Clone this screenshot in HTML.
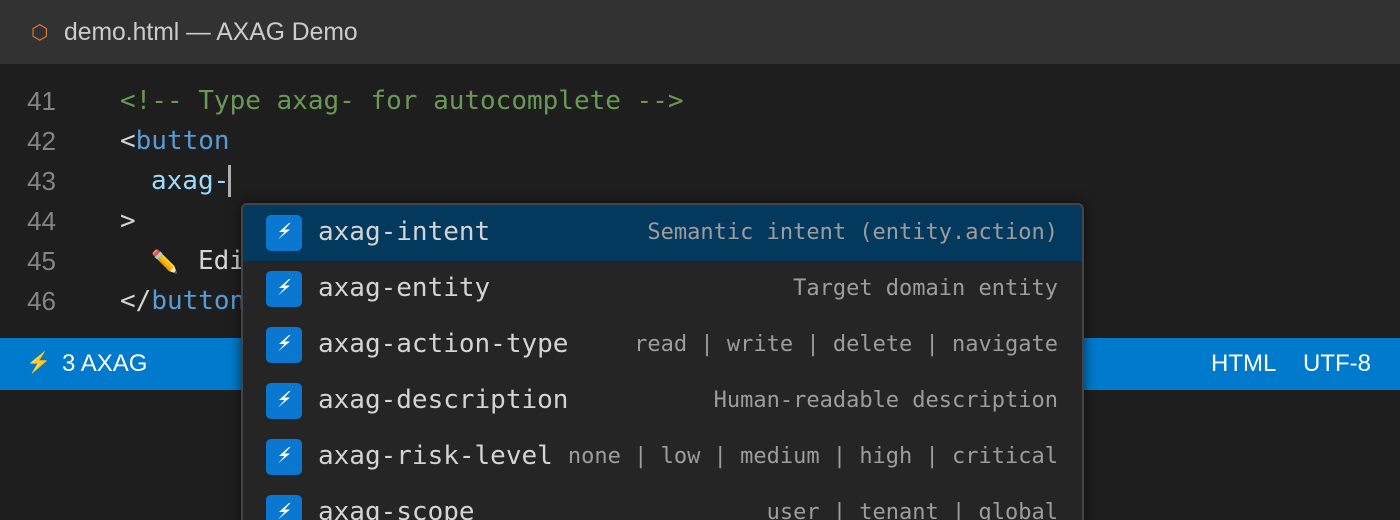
<!DOCTYPE html>
<html><head><meta charset="utf-8"><style>
*{margin:0;padding:0;box-sizing:border-box}
html{width:1400px;height:520px;overflow:hidden}
body{width:1400px;height:520px;background:#1e1e1e;overflow:hidden;position:relative;font-family:"Liberation Sans",sans-serif}
.title{position:absolute;left:0;top:0;width:1400px;height:64px;background:#323233;}
.title .hex{position:absolute;left:31px;top:20px;color:#e37933;font-size:20px}
.title .t{position:absolute;left:64px;top:19px;color:#cccccc;font-size:24.7px}
.ln{position:absolute;left:0;width:56px;text-align:right;color:#858585;font-size:26px}
.code{position:absolute;font-family:"DejaVu Sans Mono",monospace;font-size:26px;white-space:pre;color:#d4d4d4}
.cm{color:#6a9955}.tag{color:#569cd6}.attr{color:#9cdcfe}
.status{position:absolute;left:0;top:338px;width:1400px;height:52px;background:#007acc;color:#fff;font-size:24px}
.popup{position:absolute;left:241px;top:203px;width:843px;height:330px;background:#252526;border:2px solid #454545;border-radius:6px;box-shadow:0 0 12px rgba(0,0,0,.6);overflow:hidden}
.item{position:absolute;left:0;width:839px;height:56px}
.item.sel{background:#04395e}
.ic{position:absolute;left:23px;top:10px;width:36px;height:36px;background:#0a78d0;border-radius:5px}
.ic svg{position:absolute;left:0;top:0}
.lab{position:absolute;left:75px;top:12px;font-family:"DejaVu Sans Mono",monospace;font-size:26px;color:#d4d4d4;white-space:pre}
.desc{position:absolute;right:24px;top:15px;font-family:"DejaVu Sans Mono",monospace;font-size:22px;color:#9d9d9d;white-space:pre}
</style></head><body>
<svg width="0" height="0" style="position:absolute"><defs><symbol id="b" viewBox="0 0 36 36"><polygon points="23,8 13,17 18.5,17 12,24.5 24,14.5 18.5,14.5 24.5,8" fill="#fff"/></symbol></defs></svg>
<div class="title"><span class="hex">⬡</span><span class="t">demo.html — AXAG Demo</span></div>
<div class="ln" style="top:86px">41</div>
<div class="ln" style="top:126px">42</div>
<div class="ln" style="top:166px">43</div>
<div class="ln" style="top:206px">44</div>
<div class="ln" style="top:246px">45</div>
<div class="ln" style="top:286px">46</div>
<div class="code" style="left:120px;top:86px"><span class="cm">&lt;!-- Type axag- for autocomplete --&gt;</span></div>
<div class="code" style="left:120px;top:126px">&lt;<span class="tag">button</span></div>
<div class="code" style="left:151px;top:166px"><span class="attr">axag-</span></div>
<div style="position:absolute;left:228px;top:165px;width:3px;height:32px;background:#aeafad"></div>
<div class="code" style="left:120px;top:206px">&gt;</div>
<div class="code" style="left:151px;top:246px"><span style="font-size:22px">✏️</span></div>
<div class="code" style="left:198px;top:246px">Edit</div>
<div class="code" style="left:120px;top:286px">&lt;/<span class="tag">button</span>&gt;</div>
<div class="status"><span style="position:absolute;left:26px;top:12px;color:#f5c518;font-size:20px">⚡</span><span style="position:absolute;left:62px;top:12px">3 AXAG</span><span style="position:absolute;left:1211px;top:12px">HTML</span><span style="position:absolute;left:1303px;top:12px">UTF-8</span></div>
<div class="popup">
<div class="item sel" style="top:0"><div class="ic"><svg width="36" height="36"><use href="#b"/></svg></div><div class="lab">axag-intent</div><div class="desc">Semantic intent (entity.action)</div></div>
<div class="item" style="top:56px"><div class="ic"><svg width="36" height="36"><use href="#b"/></svg></div><div class="lab">axag-entity</div><div class="desc">Target domain entity</div></div>
<div class="item" style="top:112px"><div class="ic"><svg width="36" height="36"><use href="#b"/></svg></div><div class="lab">axag-action-type</div><div class="desc">read | write | delete | navigate</div></div>
<div class="item" style="top:168px"><div class="ic"><svg width="36" height="36"><use href="#b"/></svg></div><div class="lab">axag-description</div><div class="desc">Human-readable description</div></div>
<div class="item" style="top:224px"><div class="ic"><svg width="36" height="36"><use href="#b"/></svg></div><div class="lab">axag-risk-level</div><div class="desc">none | low | medium | high | critical</div></div>
<div class="item" style="top:280px"><div class="ic"><svg width="36" height="36"><use href="#b"/></svg></div><div class="lab">axag-scope</div><div class="desc">user | tenant | global</div></div>
</div>
</body></html>
